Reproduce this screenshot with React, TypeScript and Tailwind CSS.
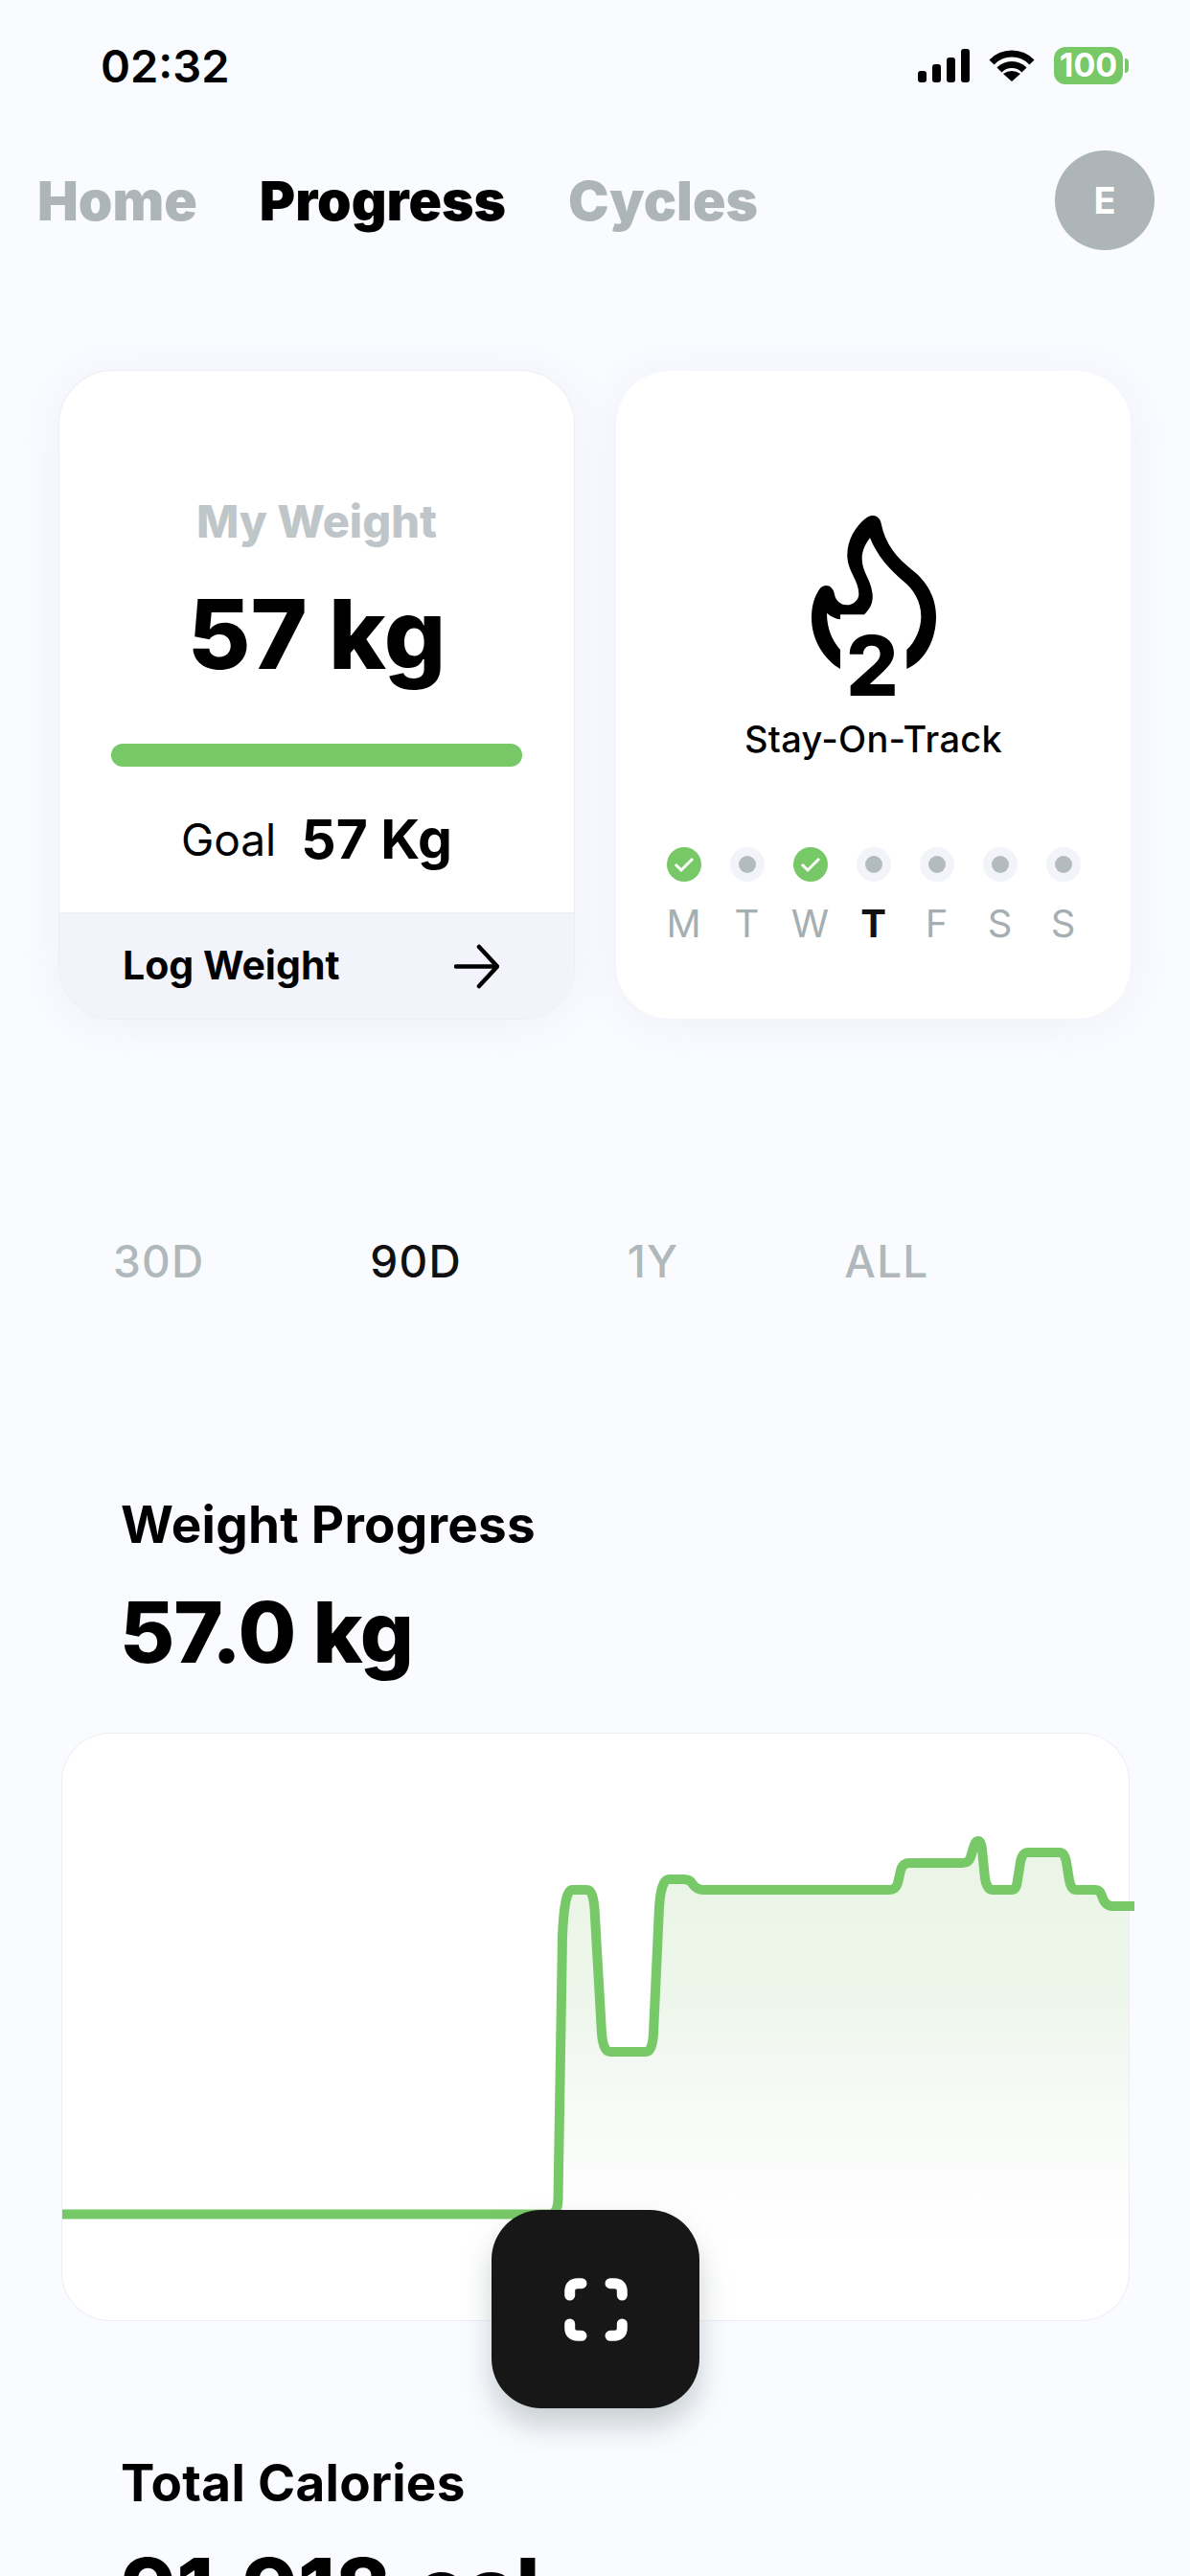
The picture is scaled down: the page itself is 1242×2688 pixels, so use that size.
const days = [
  { label: "M", done: true },
  { label: "T", done: false },
  { label: "W", done: true },
  { label: "T", done: false, today: true },
  { label: "F", done: false },
  { label: "S", done: false },
  { label: "S", done: false },
];

const curve =
  "L587 2020 Q589 1972 597 1972 L613 1972 Q620 1972 621 2000 L628 2122 Q629.5 2141 637 2141 L674 2141 Q681 2141 682 2122 L688 1990 Q690 1961 698 1961 L714 1961 Q720 1961 723 1966 Q727 1972 734 1972 L928 1972 Q935 1972 937 1965 L940 1952 Q942 1944 949 1944 L1004 1944 Q1011 1944 1013 1938 L1016 1928 Q1018 1921 1021 1921 Q1024 1921 1025 1930 L1028 1960 Q1030 1972 1036 1972 L1056 1972 Q1061 1972 1062 1962 L1065 1943 Q1067 1933 1073 1933 L1106 1933 Q1111 1933 1113 1943 L1116 1962 Q1118 1972 1123 1972 L1143 1972 Q1148 1972 1150 1978 Q1153 1989 1161 1989";

const linePath = `M65 2310.5 L574 2310.5 Q582 2310 582.5 2295 ${curve} L1184 1989`;
const fillPath = `M582.5 2310 ${curve} L1178 1989 L1178 2340 L582.5 2340 Z`;

function StatusIcons() {
  return (
    <div className="flex items-center">
      <div className="flex items-end gap-[6px] h-[35px]">
        <div className="w-[9px] h-[12px] rounded-[3px] bg-black" />
        <div className="w-[9px] h-[19px] rounded-[3px] bg-black" />
        <div className="w-[9px] h-[26px] rounded-[3px] bg-black" />
        <div className="w-[9px] h-[35px] rounded-[3px] bg-black" />
      </div>
      <svg width="48" height="36" viewBox="0 0 48 36" className="ml-[20px]">
        <path d="M3 15 A29 29 0 0 1 45 15" fill="none" stroke="#000" strokeWidth="7" />
        <path d="M11 23 A18 18 0 0 1 37 23" fill="none" stroke="#000" strokeWidth="7" />
        <path d="M24 35 L15 27 Q24 21 33 27 Z" fill="#000" />
      </svg>
      <div className="ml-[20px] w-[72px] h-[39px] rounded-[12px] bg-[#77C866] flex items-center justify-center text-white text-[34px] leading-none font-bold">
        100
      </div>
      <div className="ml-[2px] w-[4px] h-[15px] rounded-r-[4px] bg-[#77C866]" />
    </div>
  );
}

function Flame() {
  return (
    <div className="relative w-[130px] h-[190px]">
      <svg width="130" height="190" viewBox="260 115 390 570">
        <path
          fill="#000"
          d="M558 595 C615 570 650 505 650 430 C650 370 620 320 575 285 C530 250 490 205 478 140 C474 115 450 108 432 122 C395 150 370 195 372 245 C374 290 408 320 408 360 C408 380 390 395 370 395 C350 395 335 380 332 362 C328 332 300 325 285 345 C268 370 260 400 260 435 C260 505 300 565 350 595 L350 535 C325 505 308 470 308 420 C322 432 335 438 350 440 L350 425 L425 425 C445 405 455 385 450 355 C445 315 418 290 418 250 C418 225 428 205 443 185 C465 240 505 285 545 318 C580 345 603 385 603 430 C603 470 585 510 558 535 Z"
        />
      </svg>
      <span className="absolute left-0 w-[128px] top-[112px] text-center text-[86px] leading-[90px] font-extrabold text-black">
        2
      </span>
    </div>
  );
}

function DayDot({ done }: { done: boolean }) {
  if (done) {
    return (
      <div className="w-[36px] h-[36px] rounded-full bg-[#77C866] flex items-center justify-center">
        <svg width="24" height="20" viewBox="0 0 24 20">
          <path d="M3 10 L9 16 L21 4" fill="none" stroke="#fff" strokeWidth="3" />
        </svg>
      </div>
    );
  }
  return (
    <div className="w-[36px] h-[36px] rounded-full bg-[#F2F4FA] flex items-center justify-center">
      <div className="w-[18px] h-[18px] rounded-full bg-[#B4BBBE]" />
    </div>
  );
}

export default function App() {
  return (
    <div className="relative w-[1242px] h-[2688px] overflow-hidden bg-[#FAFBFF] font-['Inter',sans-serif] text-black">
      <div className="h-[136px] flex items-center justify-between pl-[105px] pr-[64px]">
        <span className="text-[47px] leading-none font-semibold">02:32</span>
        <StatusIcons />
      </div>

      <div className="h-[146px] flex items-center justify-between pl-[39px] pr-[37px]">
        <div className="flex items-center gap-[65px] text-[57px] leading-none font-black">
          <span className="text-[#AEB5B8]">Home</span>
          <span>Progress</span>
          <span className="text-[#AEB5B8]">Cycles</span>
        </div>
        <div className="w-[104px] h-[104px] rounded-full bg-[#AEB5B8] flex items-center justify-center text-white text-[38px] font-bold">
          E
        </div>
      </div>

      <div className="mt-[105px] ml-[62px] flex gap-[44px]">
        <div className="w-[537px] h-[676px] rounded-[56px] bg-white overflow-hidden flex flex-col items-center pt-[127px] shadow-[0_0_0_1px_#ECEEF6,0_4px_44px_rgba(215,220,240,0.3)]">
          <div className="h-[60px] leading-[60px] text-[47px] font-extrabold text-[#BFC6C9]">My Weight</div>
          <div className="mt-[32px] h-[110px] leading-[110px] text-[101px] font-extrabold">57 kg</div>
          <div className="mt-[60px] w-[429px] h-[24px] rounded-[12px] bg-[#77C866] shrink-0" />
          <div className="mt-[46px] h-[60px] flex items-center gap-[26px]">
            <span className="text-[46px] font-normal">Goal</span>
            <span className="text-[57px] font-bold">57 Kg</span>
          </div>
          <div className="mt-auto w-full h-[111px] bg-[#F2F3FB] border-t border-[#ECEEF6] flex items-center justify-between pl-[66px] pr-[78px]">
            <span className="text-[41px] font-bold">Log Weight</span>
            <svg width="47" height="47" viewBox="0 0 47 47">
              <path
                d="M2 23.5 H44 M26 3 L45 23.5 L26 44"
                fill="none"
                stroke="#000"
                strokeWidth="4.5"
                strokeLinecap="round"
                strokeLinejoin="round"
              />
            </svg>
          </div>
        </div>

        <div className="w-[537px] h-[676px] rounded-[56px] bg-white flex flex-col items-center pt-[151px] shadow-[0_4px_44px_rgba(215,220,240,0.3)]">
          <Flame />
          <div className="mt-[18px] h-[50px] leading-[50px] text-[38px] font-medium tracking-[0.3px]">Stay-On-Track</div>
          <div className="mt-[88px] flex">
            {days.map((day, i) => (
              <div key={i} className="w-[66px] flex flex-col items-center">
                <DayDot done={day.done} />
                <span
                  className={
                    day.today
                      ? "mt-[19px] h-[50px] leading-[50px] text-[40px] font-bold text-[#111]"
                      : "mt-[19px] h-[50px] leading-[50px] text-[40px] font-normal text-[#A5AEB0]"
                  }
                >
                  {day.label}
                </span>
              </div>
            ))}
          </div>
        </div>
      </div>

      <div className="mt-[223px] pl-[118px] h-[60px] flex items-center gap-[173px] text-[46px] leading-none font-medium tracking-[1.2px] text-[#B0B8BB]">
        <span>30D</span>
        <span className="text-[#111]">90D</span>
        <span>1Y</span>
        <span>ALL</span>
      </div>

      <div className="mt-[215px] pl-[126px] h-[60px] leading-[60px] text-[53px] font-bold tracking-[0.3px]">Weight Progress</div>
      <div className="mt-[32px] pl-[125px] h-[100px] leading-[100px] text-[88px] font-extrabold tracking-[-1px]">57.0 kg</div>

      <div className="mt-[56px] ml-[65px] w-[1113px] h-[612px] rounded-[50px] bg-white shadow-[0_0_0_1px_#ECEEF3]">
        <svg
          width="1113"
          height="612"
          viewBox="65 1809 1113 612"
          className="block overflow-visible"
        >
          <defs>
            <linearGradient id="weightFill" gradientUnits="userSpaceOnUse" x1="0" y1="1960" x2="0" y2="2340">
              <stop offset="0" stopColor="#EBF5E7" />
              <stop offset="0.3" stopColor="#EDF6EA" />
              <stop offset="0.62" stopColor="#F7FAF7" />
              <stop offset="1" stopColor="#FFFFFF" />
            </linearGradient>
          </defs>
          <path d={fillPath} fill="url(#weightFill)" />
          <path d={linePath} fill="none" stroke="#77C866" strokeWidth="10" strokeLinejoin="round" />
        </svg>
      </div>

      <div className="mt-[140px] pl-[126px] h-[60px] leading-[60px] text-[53px] font-bold tracking-[0.3px]">Total Calories</div>
      <div className="mt-[30px] pl-[126px] h-[100px] leading-[100px] text-[88px] font-extrabold [word-spacing:6px]">91,918 cal</div>

      <div className="absolute left-[513px] top-[2306px] w-[217px] h-[207px] rounded-[52px] bg-[#171717] flex items-center justify-center shadow-[0_18px_30px_rgba(110,125,125,0.35)]">
        <svg width="66" height="66" viewBox="0 0 66 66">
          <path
            d="M5.7 18 V14 Q5.7 5.7 14 5.7 H18 M48 5.7 H52 Q60.3 5.7 60.3 14 V18 M5.7 48 V52 Q5.7 60.3 14 60.3 H18 M48 60.3 H52 Q60.3 60.3 60.3 52 V48"
            fill="none"
            stroke="#fff"
            strokeWidth="11"
            strokeLinecap="round"
          />
        </svg>
      </div>
    </div>
  );
}
